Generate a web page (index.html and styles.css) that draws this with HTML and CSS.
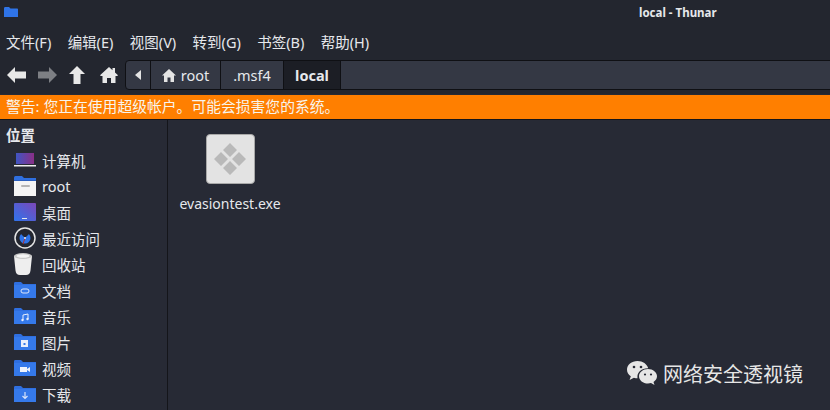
FILE: index.html
```html
<!DOCTYPE html>
<html lang="zh-CN">
<head>
    <meta charset="UTF-8">
    <title>local - Thunar</title>
    <link rel="stylesheet" href="styles.css">
</head>
<body>
    <div class="window">
        <div class="titlebar">
            <svg class="app-icon" width="14" height="10" viewBox="0 0 14 10"><path d="M0 1.500C0 .6.500 0 1.200 0H5l1.500 1.500H13c.6 0 1 .4 1 1V10H0z" fill="#2f74e8"/></svg>
            <span class="title">local - Thunar</span>
        </div>
        <div class="menubar">
            <span>文件(F)</span>
            <span>编辑(E)</span>
            <span>视图(V)</span>
            <span>转到(G)</span>
            <span>书签(B)</span>
            <span>帮助(H)</span>
        </div>
        <div class="toolbar">
            <div class="nav-buttons">
                <svg width="19" height="16" viewBox="0 0 19 16"><path d="M0 8l8-8v4.500h11v7H8V16z" fill="#e8e8e8"/></svg>
                <svg width="19" height="16" viewBox="0 0 19 16"><path d="M19 8l-8-8v4.500H0v7h11V16z" fill="#7d7f84"/></svg>
                <svg width="16" height="18" viewBox="0 0 16 18"><path d="M8 0l8 8h-4.500v10h-7V8H0z" fill="#e8e8e8"/></svg>
                <svg class="home-button" width="18" height="16" viewBox="0 0 18 16"><path d="M9 0l3.500 3.200V1h2.500v4.500L18 8.300l-.8.700H15.500v7h-4.500v-5H7v5H2.500V9H.8L0 8.300z" fill="#e8e8e8"/></svg>
            </div>
            <div class="pathbar">
                <div class="crumb crumb-back"><svg width="6" height="10" viewBox="0 0 6 10"><path d="M6 0L0 5l6 5z" fill="#e4e4e4"/></svg></div>
                <div class="crumb crumb-root">
                    <svg width="14" height="13" viewBox="0 0 14 13"><path d="M7 0l7 6.500h-2V13H8.500V8.500h-3V13H2V6.500H0z" fill="#e4e4e4"/></svg>
                    <span>root</span>
                </div>
                <div class="crumb crumb-msf">.msf4</div>
                <div class="crumb crumb-active">local</div>
            </div>
        </div>
        <div class="infobar">警告: 您正在使用超级帐户。可能会损害您的系统。</div>
        <div class="main">
            <div class="sidebar">
                <div class="side-heading">位置</div>
                <div class="side-item">
                    <svg class="side-icon" width="22" height="16" viewBox="0 0 22 16"><defs><linearGradient id="screen" x1="0" x2="1"><stop offset="0" stop-color="#3f55c4"/><stop offset="1" stop-color="#8a2f86"/></linearGradient></defs><rect x="2" y="1" width="18" height="11" fill="url(#screen)"/><rect y="13" width="22" height="1.500" fill="#eee"/></svg>
                    <span>计算机</span>
                </div>
                <div class="side-item">
                    <svg class="side-icon" width="22" height="20" viewBox="0 0 22 20"><path d="M0 2C0 .8.600 0 1.500 0H8l2 2h12v4H0z" fill="#2f6fe0"/><path d="M0 4h22v16H0z" fill="#f4f4f4"/><path d="M0 4h22v1H0z" fill="#2a5fc0"/><rect x="7" y="9" width="9" height="2" rx="1" fill="#b5b5b5"/></svg>
                    <span>root</span>
                </div>
                <div class="side-item">
                    <svg class="side-icon" width="22" height="18" viewBox="0 0 22 18"><defs><linearGradient id="desk" x1="0" y1="1" x2="1" y2="0"><stop offset="0" stop-color="#2f74ec"/><stop offset="1" stop-color="#7b47b8"/></linearGradient></defs><rect width="22" height="18" rx="1" fill="url(#desk)"/><rect x="8" y="15" width="5" height="1" fill="#e8e8e8"/></svg>
                    <span>桌面</span>
                </div>
                <div class="side-item">
                    <svg class="side-icon" width="22" height="22" viewBox="0 0 22 22"><circle cx="11" cy="11" r="10" fill="#23262f" stroke="#e4e4e4" stroke-width="1.500"/><circle cx="11" cy="11" r="5.500" fill="#2f74e8"/><path d="M6.500 6.500L11 11l4.500-4.500L11 4.500z" fill="#23262f"/><path d="M11 11l-2 6" stroke="#b03030"/><circle cx="11" cy="11" r="1" fill="#e8eefc"/></svg>
                    <span>最近访问</span>
                </div>
                <div class="side-item">
                    <svg class="side-icon" width="18" height="22" viewBox="0 0 18 22"><path d="M0 3l1.500 14.500C1.800 20.500 3.500 22 6 22h6c2.500 0 4.200-1.500 4.500-4.500L18 3z" fill="#eeeeee"/><ellipse cx="9" cy="3" rx="9" ry="3" fill="#c8c8c8"/><ellipse cx="9" cy="3" rx="6.500" ry="1.800" fill="#f4f4f4"/></svg>
                    <span>回收站</span>
                </div>
                <div class="side-item">
                    <svg class="side-icon" width="22" height="16" viewBox="0 0 22 16"><path d="M0 1.500C0 .6.500 0 1.200 0H7l2 2h13v14H0z" fill="#2f6fe0"/><path d="M0 3h22v13H0z" fill="#3579ea"/><rect x="7" y="7" width="8" height="4" rx="2" fill="none" stroke="#dce6fa"/></svg>
                    <span>文档</span>
                </div>
                <div class="side-item">
                    <svg class="side-icon" width="22" height="16" viewBox="0 0 22 16"><path d="M0 1.500C0 .6.500 0 1.200 0H7l2 2h13v14H0z" fill="#2f6fe0"/><path d="M0 3h22v13H0z" fill="#3579ea"/><path d="M9 12V7l5-1v5" fill="none" stroke="#e8eefc"/><circle cx="8.500" cy="12" r="1.200" fill="#e8eefc"/><circle cx="13.500" cy="11" r="1.200" fill="#e8eefc"/></svg>
                    <span>音乐</span>
                </div>
                <div class="side-item">
                    <svg class="side-icon" width="22" height="16" viewBox="0 0 22 16"><path d="M0 1.500C0 .6.500 0 1.200 0H7l2 2h13v14H0z" fill="#2f6fe0"/><path d="M0 3h22v13H0z" fill="#3579ea"/><rect x="7" y="6" width="7" height="7" fill="#e8eefc"/><rect x="9.500" y="9" width="2" height="2" fill="#3579ea"/></svg>
                    <span>图片</span>
                </div>
                <div class="side-item">
                    <svg class="side-icon" width="22" height="16" viewBox="0 0 22 16"><path d="M0 1.500C0 .6.500 0 1.200 0H7l2 2h13v14H0z" fill="#2f6fe0"/><path d="M0 3h22v13H0z" fill="#3579ea"/><rect x="6" y="7" width="7" height="5" fill="#f0f4fc"/><path d="M13 9l3-2v5l-3-2z" fill="#f0f4fc"/></svg>
                    <span>视频</span>
                </div>
                <div class="side-item">
                    <svg class="side-icon" width="22" height="16" viewBox="0 0 22 16"><path d="M0 1.500C0 .6.500 0 1.200 0H7l2 2h13v14H0z" fill="#2f6fe0"/><path d="M0 3h22v13H0z" fill="#3579ea"/><path d="M11 6v6M8.500 10l2.500 2.500 2.500-2.500" fill="none" stroke="#d8e4fa" stroke-width="1.200"/></svg>
                    <span>下载</span>
                </div>
            </div>
            <div class="files">
                <div class="file">
                    <div class="exe-icon">
                        <svg width="34" height="34" viewBox="0 0 34 34"><path d="M17 1l7 7-7 7-7-7zM8 10l7 7-7 7-7-7zM26 10l7 7-7 7-7-7zM17 19l7 7-7 7-7-7z" fill="#b9b9b9"/></svg>
                    </div>
                    <div class="file-name">evasiontest.exe</div>
                </div>
            </div>
        </div>
        <div class="watermark">
            <svg width="32" height="27" viewBox="0 0 32 27"><path d="M11.500 1C5.600 1 1 4.900 1 9.700c0 2.700 1.500 5 3.800 6.600L3.600 20l4.300-2.300c1.200.4 2.400.5 3.600.5 0-.4-.1-.9-.1-1.300 0-4.800 4.400-8.600 9.900-8.600h.9C21.200 4.200 16.800 1 11.500 1z" fill="#e6e6e6"/><path d="M31 16.200c0-4-4-7.300-9-7.300s-9 3.300-9 7.300 4 7.300 9 7.300c1 0 2-.1 3-.4l3.500 2-1-3.100c2.100-1.500 3.500-3.500 3.500-5.800z" fill="#e6e6e6"/><circle cx="8" cy="7" r="1.300" fill="#272a35"/><circle cx="15" cy="7" r="1.300" fill="#272a35"/><circle cx="19" cy="14.500" r="1.100" fill="#272a35"/><circle cx="25" cy="14.500" r="1.100" fill="#272a35"/></svg>
            <span>网络安全透视镜</span>
        </div>
    </div>
</body>
</html>
```

FILE: styles.css
```css
html, body {
    margin: 0;
    padding: 0;
}
body {
    width: 830px;
    height: 410px;
    overflow: hidden;
    background-color: #272a35;
    color: #e6e8ec;
    font-family: "Noto Sans", "Noto Sans CJK SC", sans-serif;
    font-size: 14.5px;
}
.window {
    position: relative;
    display: flex;
    flex-direction: column;
    height: 410px;
}
.titlebar {
    position: relative;
    height: 27px;
    background-color: #23262f;
    flex-shrink: 0;
}
.app-icon {
    position: absolute;
    left: 4px;
    top: 7px;
}
.title {
    display: block;
    padding-left: 639px;
    font-size: 11.5px;
    font-weight: 700;
    line-height: 25px;
    white-space: nowrap;
}
.menubar {
    display: flex;
    gap: 16.4px;
    height: 30px;
    padding-left: 6px;
    padding-bottom: 2px;
    box-sizing: border-box;
    align-items: center;
    background-color: #23262f;
    flex-shrink: 0;
}
.toolbar {
    display: flex;
    align-items: flex-start;
    height: 37px;
    padding-top: 3px;
    box-sizing: border-box;
    background-color: #23262f;
    flex-shrink: 0;
}
.nav-buttons {
    display: flex;
    align-items: center;
    gap: 12px;
    width: 125px;
    height: 29px;
    padding-left: 7px;
    box-sizing: border-box;
}
.home-button {
    margin-left: 3px;
}
.pathbar {
    display: flex;
    flex: 1;
    height: 30px;
    margin-right: -4px;
    background-color: #343844;
    border: 1px solid #0f1014;
    border-radius: 4px;
    box-sizing: border-box;
}
.crumb {
    display: flex;
    align-items: center;
    justify-content: center;
    gap: 5px;
    box-sizing: border-box;
    border-right: 1px solid #0f1014;
}
.crumb-back {
    width: 25px;
}
.crumb-root {
    width: 70px;
}
.crumb-msf {
    width: 63px;
}
.crumb-active {
    width: 57px;
    background-color: #1c1e25;
    font-weight: 700;
}
.infobar {
    height: 24px;
    margin-top: 1px;
    padding-left: 6px;
    background-color: #ff7f00;
    border-bottom: 1px solid #14151a;
    color: #f8f4ec;
    font-size: 14.8px;
    line-height: 22px;
    flex-shrink: 0;
}
.main {
    display: flex;
    flex: 1;
    min-height: 0;
}
.sidebar {
    width: 168px;
    box-sizing: border-box;
    padding-top: 5px;
    border-right: 1px solid #14151a;
    flex-shrink: 0;
}
.side-heading {
    padding-left: 6px;
    height: 22px;
    line-height: 20px;
    font-weight: 700;
}
.side-item {
    display: flex;
    align-items: center;
    height: 26px;
}
.side-item span {
    margin-left: 42px;
}
.side-icon {
    position: absolute;
    left: 14px;
}
.files {
    flex: 1;
    padding-top: 14px;
    padding-left: 10px;
}
.file {
    width: 104px;
    display: flex;
    flex-direction: column;
    align-items: center;
}
.exe-icon {
    display: flex;
    align-items: center;
    justify-content: center;
    width: 49px;
    height: 50px;
    box-sizing: border-box;
    background-color: #e3e3e3;
    border: 1px solid #a8a8a8;
    border-radius: 4px;
}
.file-name {
    margin-top: 10px;
    font-size: 14px;
}
.watermark {
    position: absolute;
    right: 27px;
    bottom: 22px;
    display: flex;
    align-items: center;
    gap: 5px;
    color: #e6e6e6;
    font-size: 20px;
}
```
